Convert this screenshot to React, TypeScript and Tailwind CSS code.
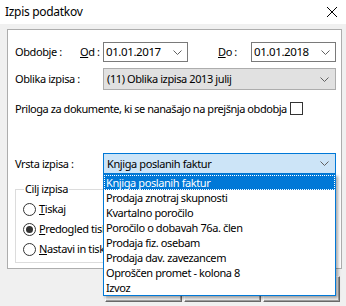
import React from "react";

const Chevron = () => (
  <svg width="9" height="5" viewBox="0 0 9 5" className="shrink-0">
    <polyline points="0.5,0.5 4.5,4.5 8.5,0.5" fill="none" stroke="#606060" strokeWidth="1" />
  </svg>
);

const items = [
  "Knjiga poslanih faktur",
  "Prodaja znotraj skupnosti",
  "Kvartalno poročilo",
  "Poročilo o dobavah 76a. člen",
  "Prodaja fiz. osebam",
  "Prodaja dav. zavezancem",
  "Oproščen promet - kolona 8",
  "Izvoz",
];

const Radio = ({ checked, label, rest }: { checked?: boolean; label: string; rest: string }) => (
  <div className="flex h-[20px] items-center pl-[7px]">
    <div className="flex h-[13px] w-[13px] items-center justify-center rounded-full border border-[#333333] bg-white">
      {checked && <div className="h-[7px] w-[7px] rounded-full bg-[#333333]" />}
    </div>
    <span className="ml-[3px] whitespace-nowrap">
      <span className="underline">{label}</span>
      {rest}
    </span>
  </div>
);

export default function App() {
  return (
    <div
      className="relative h-[306px] w-[346px] overflow-hidden whitespace-nowrap bg-[#f0f0f0] text-[11px] leading-[16px] tracking-[-0.4px] text-black"
      style={{ fontFamily: '"Noto Sans", "Open Sans", sans-serif' }}
    >
      <div className="flex h-[24px] items-center justify-between bg-white pl-[5px] pr-[9px]">
        <span className="text-[12px] tracking-[-0.3px]">Izpis podatkov</span>
        <svg width="10" height="10" viewBox="0 0 10 10">
          <line x1="0" y1="0" x2="10" y2="10" stroke="#000" strokeWidth="1" />
          <line x1="10" y1="0" x2="0" y2="10" stroke="#000" strokeWidth="1" />
        </svg>
      </div>

      <div className="ml-[7px] mt-[5px] flex h-[240px] w-[335px] flex-col border border-[#adadad] bg-white pl-[7px] pt-[12px]">
        <div className="flex h-[20px] items-center">
          <span className="w-[65px]">Obdobje :</span>
          <span className="w-[23px]">
            <span className="underline">O</span>d :
          </span>
          <div className="flex h-[20px] w-[85px] items-center justify-between border border-[#7a7a7a] pl-[2px] pr-[5px]">
            <span className="text-[11.5px]">01.01.2017</span>
            <Chevron />
          </div>
          <span className="ml-[30px] w-[33px]">
            <span className="underline">D</span>o :
          </span>
          <div className="flex h-[20px] w-[85px] items-center justify-between border border-[#7a7a7a] pl-[2px] pr-[5px]">
            <span className="text-[11.5px]">01.01.2018</span>
            <Chevron />
          </div>
        </div>

        <div className="mt-[6px] flex h-[22px] items-center">
          <span className="w-[88px]">Oblika izpisa :</span>
          <div className="flex h-[22px] w-[233px] items-center justify-between border border-[#adadad] bg-[#e1e1e1] pl-[3px] pr-[6px]">
            <span>(11) Oblika izpisa 2013 julij</span>
            <Chevron />
          </div>
        </div>

        <div className="mt-[12px] flex h-[13px] items-center">
          <span className="tracking-[-0.45px]">Priloga za dokumente, ki se nanašajo na prejšnja obdobja</span>
          <div className="ml-[3px] h-[13px] w-[13px] border border-[#333333] bg-white" />
        </div>

        <div className="mt-[38px] flex h-[21px] items-center">
          <span className="w-[88px]">Vrsta izpisa :</span>
          <div className="flex h-[21px] w-[233px] items-center justify-between border border-[#0078d7] bg-[#cce4f7] pl-[3px] pr-[6px]">
            <span>Knjiga poslanih faktur</span>
            <Chevron />
          </div>
        </div>

        <fieldset className="mt-[7px] h-[82px] w-[160px] border border-[#dcdcdc]">
          <legend className="ml-[8px] px-[1px]">Cilj izpisa</legend>
          <div className="mt-[2px]">
            <Radio label="T" rest="iskaj" />
            <Radio checked label="P" rest="redogled tiskanja" />
            <Radio label="N" rest="astavi in tiskalnik" />
          </div>
        </fieldset>
      </div>

      <div className="mt-[7px] flex justify-end gap-[2px] pr-[6px]">
        {["Natisni", "V redu", "Prekliči"].map((b) => (
          <div
            key={b}
            className="flex h-[26px] w-[77px] items-center justify-center border border-b-[#696969] border-l-white border-r-[#696969] border-t-white bg-[#f0f0f0] shadow-[inset_-1px_-1px_0_#a0a0a0]"
          >
            {b}
          </div>
        ))}
      </div>

      <div className="absolute left-[103px] top-[174px] w-[233px] border border-[#0078d7] bg-white shadow-[2px_2px_3px_rgba(0,0,0,0.35)]">
        {items.map((it, i) => (
          <div
            key={it}
            className={
              i === 0
                ? "flex h-[15px] items-center bg-[#0078d7] pl-[2px] text-white outline-1 -outline-offset-1 outline-dotted outline-[#ffffff]"
                : "flex h-[15px] items-center pl-[2px]"
            }
          >
            {it}
          </div>
        ))}
      </div>
    </div>
  );
}
